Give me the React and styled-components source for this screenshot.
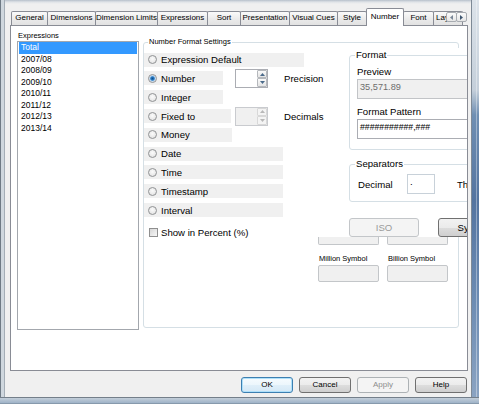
import React from "react";
import styled, { createGlobalStyle, css } from "styled-components";

const GlobalStyle = createGlobalStyle`
  html, body { margin: 0; padding: 0; }
  body {
    background: #f0f0f0;
    font-family: "Liberation Sans", Arial, sans-serif;
    color: #000;
  }
  * { box-sizing: border-box; }
`;

const Window = styled.div`
  width: 479px;
  height: 404px;
  display: flex;
  flex-direction: column;
  overflow: hidden;
`;

const WindowBody = styled.div`
  height: 397px;
  display: flex;
`;

const LeftFrame = styled.div`
  width: 5px;
  background: linear-gradient(to right, #6f7a85 0 1px, #cfd7de 1px 4px, #a4adb6 4px 5px);
`;

const RightFrame = styled.div`
  width: 8px;
  background: linear-gradient(to right, #7d8996 0 1px, transparent 1px),
    linear-gradient(to right, transparent 0 5px, rgba(255, 255, 255, 0.35) 5px 6px, transparent 6px),
    linear-gradient(to bottom, #dce3ea 0, #c4cfda 90px, #6f8fb3 115px, #5474a0 200px, #6c8cb3 300px, #8aa3c2 397px);
`;

const BottomFrame = styled.div`
  height: 7px;
  background: linear-gradient(#747f8a 0 1px, #c3ced9 1px, #9fb3c8 6px, #6f8090 7px);
`;

const Client = styled.div`
  width: 466px;
  display: flex;
  flex-direction: column;
  padding-top: 8px;
  background: linear-gradient(#b6c0ca 0, #dfe3e7 2px, #f0f0f0 4px);
`;

const TabStrip = styled.div`
  position: relative;
  height: 17px;
  margin-left: 6px;
  display: flex;
  align-items: flex-end;
`;

const Tab = styled.div`
  flex: none;
  width: ${(p) => p.$w}px;
  height: 14px;
  margin-left: -1px;
  border: 1px solid #898c95;
  border-bottom: none;
  border-radius: 2px 2px 0 0;
  background: linear-gradient(#fafafa, #e9e9e9 60%, #e2e2e2);
  font-size: 8px;
  line-height: 12px;
  text-align: center;
  white-space: nowrap;
  overflow: hidden;
  &:first-child { margin-left: 0; }
  ${(p) =>
    p.$active &&
    css`
      position: relative;
      z-index: 2;
      height: 18px;
      margin-bottom: -1px;
      background: #fff;
      line-height: 13px;
      padding-top: 1px;
    `}
`;

const ScrollArrows = styled.div`
  position: absolute;
  right: 4px;
  top: 4px;
  display: flex;
  z-index: 3;
`;

const ArrowButton = styled.div`
  width: 11px;
  height: 10px;
  border: 1px solid #a7abb0;
  border-radius: 2px;
  margin-left: -1px;
  background: linear-gradient(#fbfbfb, #e6e6e6);
  display: flex;
  align-items: center;
  justify-content: center;
`;

const Panel = styled.div`
  position: relative;
  z-index: 1;
  margin-left: 5px;
  width: 458px;
  height: 346px;
  border: 1px solid #898c95;
  background: #fff;
  overflow: hidden;
  display: flex;
  align-items: flex-start;
  padding: 5px 0 0 6px;
`;

const ListColumn = styled.div`
  display: flex;
  flex-direction: column;
`;

const SmallLabel = styled.div`
  font-size: 7.5px;
  line-height: 10px;
  padding-left: 1px;
  width: ${(p) => p.$w || "auto"};
  white-space: nowrap;
`;

const ListBox = styled.div`
  width: 122px;
  height: 289px;
  border: 1px solid #a3a7ad;
  padding: 0 1px;
`;

const ListItem = styled.div`
  height: 11.5px;
  line-height: 11.5px;
  font-size: 8.5px;
  padding-left: 2px;
  ${(p) =>
    p.$selected &&
    css`
      background: #3399ff;
      color: #fff;
    `}
`;

const GroupBox = styled.div`
  position: relative;
  flex: none;
  border: 1px solid #d5dfe5;
  border-radius: 3px;
  width: ${(p) => p.$w}px;
  height: ${(p) => p.$h}px;
`;

const Legend = styled.span`
  position: absolute;
  left: ${(p) => p.$left}px;
  top: ${(p) => p.$top}px;
  padding: 0 1px;
  background: #fff;
  font-size: ${(p) => p.$size}px;
  line-height: ${(p) => p.$line}px;
  white-space: nowrap;
`;

const SettingsGroup = styled(GroupBox)`
  margin: 11px 0 0 4px;
  display: flex;
`;

const OptionColumn = styled.div`
  flex: none;
  width: 174px;
  padding-top: 9.7px;
  display: flex;
  flex-direction: column;
  gap: 4.8px;
`;

const OptionRow = styled.div`
  height: 14px;
  display: grid;
  grid-template-columns: 91px 33px auto;
  align-items: center;
`;

const OptionBar = styled.div`
  width: ${(p) => p.$w}px;
  height: 14px;
  background: #f0f0f0;
  display: flex;
  align-items: center;
  padding-left: 4px;
  gap: 4px;
  font-size: 9.6px;
  white-space: nowrap;
`;

const Radio = styled.span`
  flex: none;
  width: 9px;
  height: 9px;
  border-radius: 50%;
  border: 1px solid #909294;
  background: radial-gradient(circle at 50% 40%, #fbfbfb 0, #dedede 100%);
  ${(p) =>
    p.$checked &&
    css`
      background: radial-gradient(circle, #0d4d8c 0, #2f7fc5 1.8px, #a9cdef 2.6px, #f2f2f2 3.6px);
    `}
`;

const CheckRow = styled.div`
  margin-top: 3.2px;
  height: 14px;
  display: flex;
  align-items: center;
  padding-left: 5px;
  gap: 3px;
  font-size: 9.6px;
`;

const CheckBox = styled.span`
  width: 9px;
  height: 9px;
  border: 1px solid #8f8f8f;
  background: linear-gradient(135deg, #d6d6d6, #f7f7f7);
`;

const Spin = styled.div`
  width: 33px;
  height: 19px;
  margin: -2.5px 0;
  border: 1px solid ${(p) => (p.$disabled ? "#c9cbcf" : "#abadb3")};
  background: ${(p) => (p.$disabled ? "#f0f0f0" : "#fff")};
  display: flex;
  justify-content: flex-end;
`;

const SpinButtons = styled.div`
  width: 10px;
  display: flex;
  flex-direction: column;
`;

const SpinButton = styled.div`
  flex: 1;
  border: 1px solid ${(p) => (p.$disabled ? "#d8d8d8" : "#b5b8bc")};
  border-radius: 1px;
  background: ${(p) => (p.$disabled ? "#f4f4f4" : "linear-gradient(#fafafa, #e4e4e4)")};
  display: flex;
  align-items: center;
  justify-content: center;
`;

const SideLabel = styled.span`
  margin-left: 16px;
  font-size: 9.6px;
  white-space: nowrap;
`;

const RightPane = styled.div`
  flex: none;
  width: 200px;
  margin-top: 5px;
  display: flex;
  flex-direction: column;
`;

const UpperPane = styled.div`
  height: 189px;
  margin-left: 24px;
  background: #fff;
  padding: 7px 0 0 7px;
  display: flex;
  flex-direction: column;
`;

const FormatBox = styled(GroupBox)`
  padding: 10px 0 0 7px;
`;

const FieldLabel = styled.div`
  font-size: 9.6px;
  line-height: 11px;
  margin-top: ${(p) => p.$mt || 0}px;
`;

const Field = styled.div`
  margin-top: 2px;
  width: 150px;
  height: 20px;
  border: 1px solid ${(p) => (p.$disabled ? "#c2c4c7" : "#abadb3")};
  background: ${(p) => (p.$disabled ? "#f0f0f0" : "#fff")};
  color: ${(p) => (p.$disabled ? "#6d6d6d" : "#000")};
  font-size: ${(p) => p.$size}px;
  line-height: 12px;
  padding: 1px 0 0 2px;
  white-space: nowrap;
`;

const SeparatorBox = styled(GroupBox)`
  margin-top: 14px;
  display: flex;
  align-items: center;
  padding: 2px 0 0 8px;
  font-size: 9.6px;
`;

const InlineLabel = styled.span`
  width: ${(p) => p.$w || "auto"};
  margin-left: ${(p) => p.$ml || 0}px;
  white-space: nowrap;
`;

const SmallInput = styled.div`
  width: 28px;
  height: 20px;
  border: 1px solid #c8d1d9;
  font-size: 9.6px;
  line-height: 14px;
  padding-left: 2px;
`;

const PaneButtons = styled.div`
  margin-top: 16px;
  display: flex;
  gap: 19px;
`;

const PaneButton = styled.div`
  flex: none;
  width: ${(p) => p.$w}px;
  height: 19px;
  border: 1px solid ${(p) => (p.$disabled ? "#c3c6c9" : "#707070")};
  border-radius: 3px;
  background: ${(p) =>
    p.$disabled ? "#f4f4f4" : "linear-gradient(#f2f2f2 0%, #ebebeb 50%, #dddddd 51%, #cfcfcf 100%)"};
  color: ${(p) => (p.$disabled ? "#9a9a9a" : "#000")};
  font-size: 9.6px;
  line-height: 17px;
  text-align: center;
  white-space: nowrap;
`;

const SymbolRow = styled.div`
  display: flex;
  gap: 8px;
  margin-top: ${(p) => p.$mt || 0}px;
`;

const SymbolBox = styled.div`
  width: 61px;
  height: ${(p) => p.$h}px;
  border: 1px solid #c3c6c9;
  background: #f0f0f0;
  border-radius: 2px;
  ${(p) =>
    p.$partial &&
    css`
      border-top: none;
      border-radius: 0 0 2px 2px;
    `}
`;

const ButtonBar = styled.div`
  margin-top: 6px;
  padding-right: 4px;
  display: flex;
  justify-content: flex-end;
  gap: 6px;
`;

const DialogButton = styled.div`
  width: 52px;
  height: 16px;
  border: 1px solid #707070;
  border-radius: 3px;
  background: linear-gradient(#f2f2f2 0%, #ebebeb 50%, #dddddd 51%, #cfcfcf 100%);
  font-size: 8px;
  line-height: 14px;
  text-align: center;
  ${(p) =>
    p.$default &&
    css`
      border-color: #3c7fb1;
      box-shadow: inset 0 0 0 1px #aee0fa;
      background: linear-gradient(#f6fbfe 0%, #ecf6fc 50%, #e0eff9 51%, #d4e8f6 100%);
    `}
  ${(p) =>
    p.$disabled &&
    css`
      border-color: #adb2b5;
      background: #f4f4f4;
      color: #8d8d8d;
    `}
`;

const Triangle = ({ dir, color = "#3a3a3a" }) => {
  const shapes = {
    up: ["5", "3", "0,3 2.5,0 5,3"],
    down: ["5", "3", "0,0 2.5,3 5,0"],
    left: ["3", "5", "3,0 0,2.5 3,5"],
    right: ["3", "5", "0,0 3,2.5 0,5"],
  };
  const [w, h, pts] = shapes[dir];
  return (
    <svg width={w} height={h} viewBox={`0 0 ${w} ${h}`}>
      <polygon points={pts} fill={color} />
    </svg>
  );
};

const tabs = [
  ["General", 37],
  ["Dimensions", 49],
  ["Dimension Limits", 63],
  ["Expressions", 51],
  ["Sort", 34],
  ["Presentation", 50],
  ["Visual Cues", 49],
  ["Style", 30],
  ["Number", 38, true],
  ["Font", 31],
  ["Layout", 30],
];

const expressions = ["Total", "2007/08", "2008/09", "2009/10", "2010/11", "2011/12", "2012/13", "2013/14"];

const options = [
  { label: "Expression Default", w: 160 },
  { label: "Number", w: 79, checked: true, spin: "Precision" },
  { label: "Integer", w: 79 },
  { label: "Fixed to", w: 87, spin: "Decimals", disabled: true },
  { label: "Money", w: 88 },
  { label: "Date", w: 139 },
  { label: "Time", w: 139 },
  { label: "Timestamp", w: 139 },
  { label: "Interval", w: 139 },
];

const SpinBox = ({ disabled }) => {
  const c = disabled ? "#b8b8b8" : "#4a6a8a";
  return (
    <Spin $disabled={disabled}>
      <SpinButtons>
        <SpinButton $disabled={disabled}>
          <Triangle dir="up" color={c} />
        </SpinButton>
        <SpinButton $disabled={disabled}>
          <Triangle dir="down" color={c} />
        </SpinButton>
      </SpinButtons>
    </Spin>
  );
};

const App = () => (
  <>
    <GlobalStyle />
    <Window>
      <WindowBody>
        <LeftFrame />
        <Client>
          <TabStrip>
            {tabs.map(([name, w, active]) => (
              <Tab key={name} $w={w} $active={active}>
                {name}
              </Tab>
            ))}
            <ScrollArrows>
              <ArrowButton>
                <Triangle dir="left" color="#7a8797" />
              </ArrowButton>
              <ArrowButton>
                <Triangle dir="right" color="#3f5670" />
              </ArrowButton>
            </ScrollArrows>
          </TabStrip>

          <Panel>
            <ListColumn>
              <SmallLabel>Expressions</SmallLabel>
              <ListBox>
                {expressions.map((e, i) => (
                  <ListItem key={e} $selected={i === 0}>
                    {e}
                  </ListItem>
                ))}
              </ListBox>
            </ListColumn>

            <SettingsGroup $w={316} $h={286}>
              <Legend $left={4} $top={-6} $size={7.5} $line={10}>
                Number Format Settings
              </Legend>
              <OptionColumn>
                {options.map((o) => (
                  <OptionRow key={o.label}>
                    <OptionBar $w={o.w}>
                      <Radio $checked={o.checked} />
                      {o.label}
                    </OptionBar>
                    {o.spin && <SpinBox disabled={o.disabled} />}
                    {o.spin && <SideLabel>{o.spin}</SideLabel>}
                  </OptionRow>
                ))}
                <CheckRow>
                  <CheckBox />
                  Show in Percent (%)
                </CheckRow>
              </OptionColumn>

              <RightPane>
                <UpperPane>
                  <FormatBox $w={200} $h={95}>
                    <Legend $left={5} $top={-7} $size={9.6} $line={11}>
                      Format
                    </Legend>
                    <FieldLabel>Preview</FieldLabel>
                    <Field $disabled $size={9.2}>
                      35,571.89
                    </Field>
                    <FieldLabel $mt={7}>Format Pattern</FieldLabel>
                    <Field $size={8.7}>###########,###</Field>
                  </FormatBox>
                  <SeparatorBox $w={200} $h={38}>
                    <Legend $left={5} $top={-7} $size={9.6} $line={11}>
                      Separators
                    </Legend>
                    <InlineLabel $w="49px">Decimal</InlineLabel>
                    <SmallInput>.</SmallInput>
                    <InlineLabel $ml={22}>Thousand</InlineLabel>
                  </SeparatorBox>
                  <PaneButtons>
                    <PaneButton $w={70} $disabled>
                      ISO
                    </PaneButton>
                    <PaneButton $w={76}>Symbols</PaneButton>
                  </PaneButtons>
                </UpperPane>
                <SymbolRow>
                  <SymbolBox $h={8} $partial />
                  <SymbolBox $h={8} $partial />
                </SymbolRow>
                <SymbolRow $mt={9}>
                  <SmallLabel $w="61px">Million Symbol</SmallLabel>
                  <SmallLabel>Billion Symbol</SmallLabel>
                </SymbolRow>
                <SymbolRow $mt={1}>
                  <SymbolBox $h={17} />
                  <SymbolBox $h={17} />
                </SymbolRow>
              </RightPane>
            </SettingsGroup>
          </Panel>

          <ButtonBar>
            <DialogButton $default>OK</DialogButton>
            <DialogButton>Cancel</DialogButton>
            <DialogButton $disabled>Apply</DialogButton>
            <DialogButton>Help</DialogButton>
          </ButtonBar>
        </Client>
        <RightFrame />
      </WindowBody>
      <BottomFrame />
    </Window>
  </>
);

export default App;
